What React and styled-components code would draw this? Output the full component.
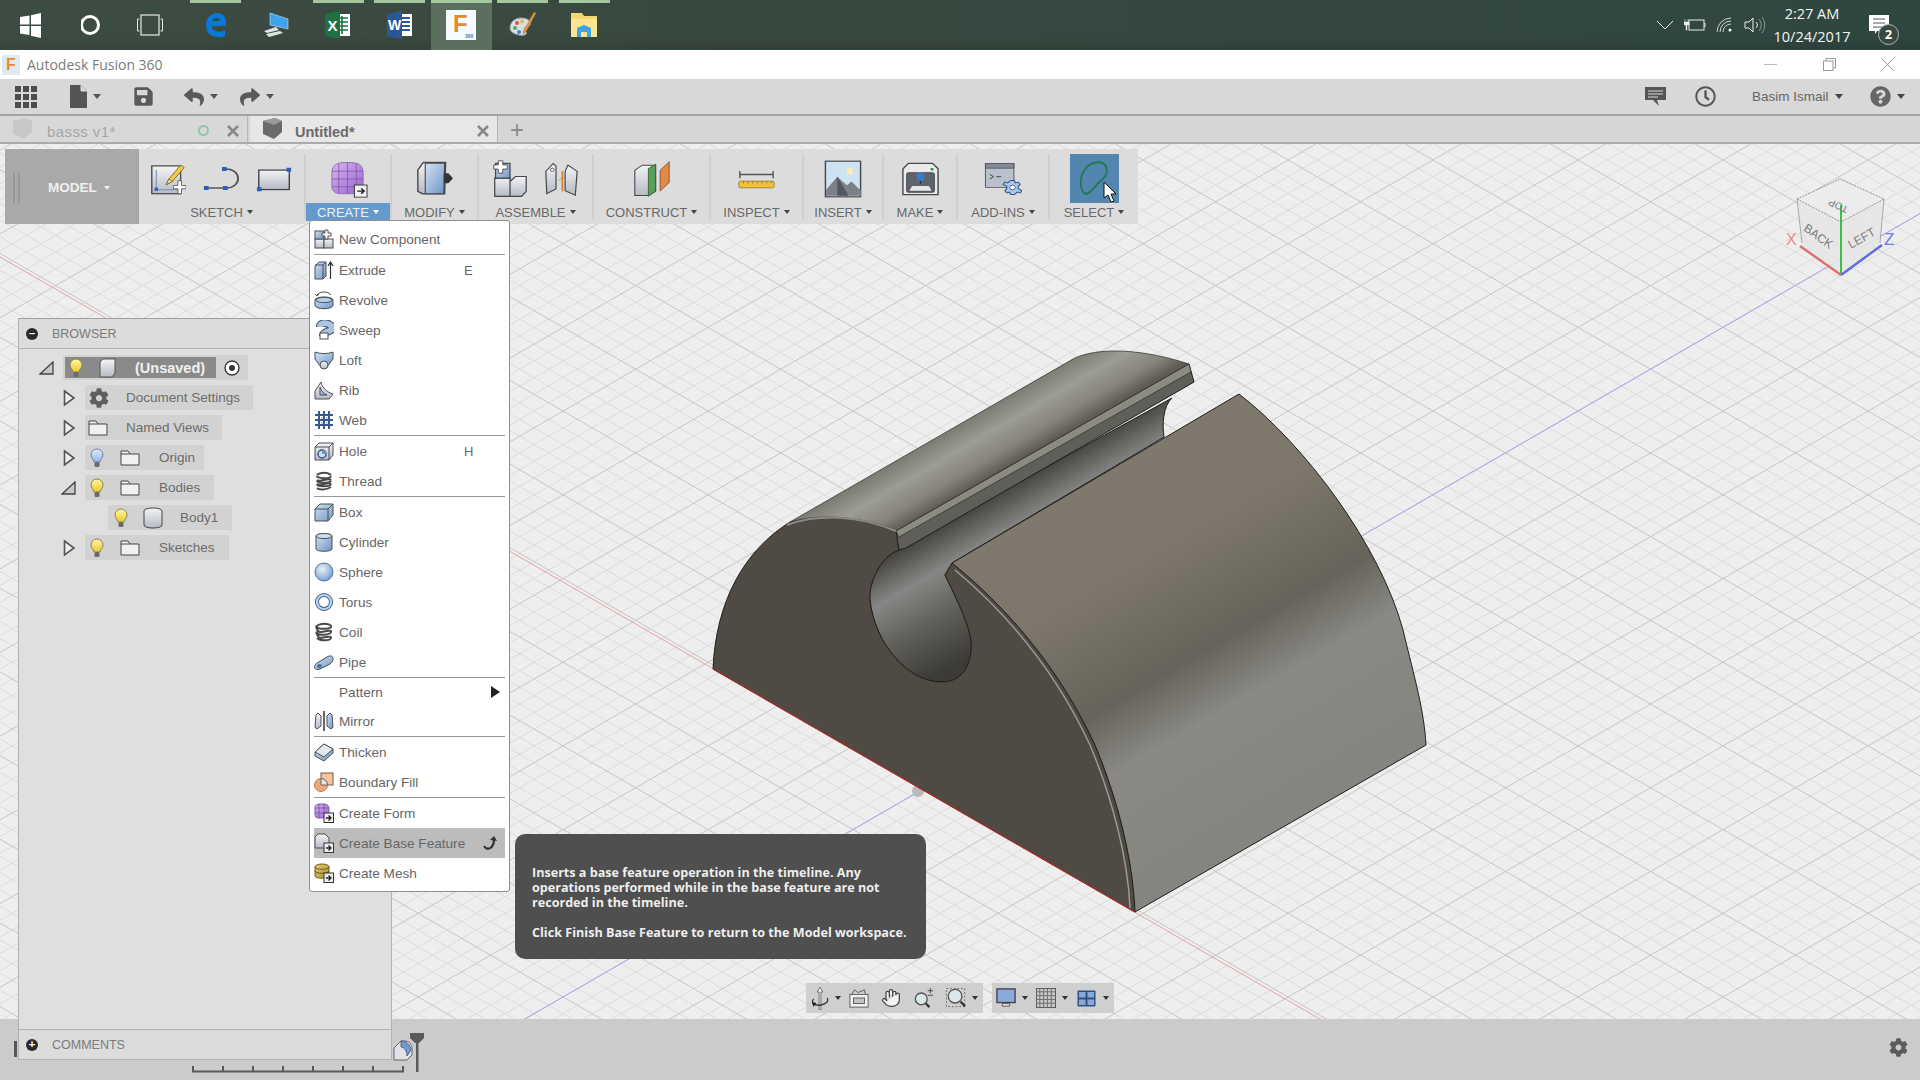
import React from "react"
import styled, { createGlobalStyle } from "styled-components"
import { FaCog, FaReply, FaShare, FaSave, FaRegClock, FaQuestionCircle } from "react-icons/fa"
import { Hand } from "lucide-react"

const GlobalStyle = createGlobalStyle`
  html, body { margin: 0; padding: 0; background: #ccc; overflow: hidden; }
  * { box-sizing: border-box; }
  #root { width: 1920px; height: 1080px; }
`

const Page = styled.div`
  width: 1920px;
  height: 1080px;
  display: flex;
  flex-direction: column;
  font-family: "Liberation Sans", Arial, sans-serif;
  overflow: hidden;
`

/* ---------- windows taskbar ---------- */
const Taskbar = styled.div`
  height: 50px;
  display: flex;
  background: linear-gradient(180deg, rgba(0,0,0,0) 70%, rgba(0,0,0,.1) 100%), linear-gradient(90deg, #3d4c42, #37483f 45%, #2f4640);
`
const Slot = styled.div`
  width: 61.5px;
  display: flex;
  flex-direction: column;
  align-items: center;
  background: ${p => (p.$active ? "#5b6f5e" : "transparent")};
`
const Tick = styled.div`
  height: 3px;
  width: ${p => (p.$active ? "100%" : "51px")};
  background: ${p => (p.$on ? "#a5c79d" : "transparent")};
`
const SlotIcon = styled.div`
  flex: 1;
  display: flex;
  align-items: center;
  justify-content: center;
  padding-bottom: 3px;
`
const Tray = styled.div`
  margin-left: auto;
  width: 270px;
  display: flex;
`
const TraySlot = styled.div`
  width: 30px;
  display: flex;
  align-items: center;
  justify-content: center;
`
const Clock = styled.div`
  width: 84px;
  text-align: center;
  color: #f2f5f2;
  font: 14.5px/23px "Open Sans", sans-serif;
  padding-top: 2px;
  white-space: nowrap;
`
const NotifSlot = styled.div`
  position: relative;
  width: 66px;
  padding: 15px 0 0 15px;
`
const Badge = styled.div`
  position: absolute;
  left: 24px;
  top: 24px;
  width: 21px;
  height: 21px;
  border-radius: 50%;
  background: #38493f;
  border: 1px solid #aeb8b0;
  color: #fff;
  font: bold 13px/19px "Open Sans", sans-serif;
  text-align: center;
`

/* ---------- title bar ---------- */
const TitleBar = styled.div`
  height: 29px;
  background: #fff;
  display: flex;
  align-items: center;
  padding-left: 2px;
`
const TitleText = styled.div`
  margin-left: 7px;
  color: #7b7b7b;
  font: 14px "Open Sans", sans-serif;
`
const WinButtons = styled.div`
  margin-left: auto;
  display: flex;
  padding-right: 3px;
`
const WinButton = styled.div`
  width: 58.5px;
  height: 29px;
  display: flex;
  align-items: center;
  justify-content: center;
`
const AppIcon = styled.div`
  width: 18px;
  height: 20px;
  background: #dfeaf5;
  color: #e88a2c;
  font: bold 16px/20px "Liberation Sans", sans-serif;
  text-align: center;
`

/* ---------- app toolbar ---------- */
const Toolbar = styled.div`
  height: 37px;
  background: #d8d8d8;
  border-bottom: 2px solid #a3a3a3;
  display: flex;
  align-items: center;
`
const ToolItem = styled.div`
  display: flex;
  align-items: center;
  margin-left: ${p => p.$ml || 0}px;
  color: #555;
  gap: 6px;
`
const Caret = styled.span`
  display: inline-block;
  width: 0;
  height: 0;
  flex: none;
  border-left: ${p => p.$s || 4}px solid transparent;
  border-right: ${p => p.$s || 4}px solid transparent;
  border-top: ${p => (p.$s || 4) + 1}px solid ${p => p.$c || "#555"};
`
const UserName = styled.span`
  color: #666;
  font-size: 13.5px;
`

/* ---------- tabs ---------- */
const TabStrip = styled.div`
  height: 28px;
  display: flex;
  background: #d6d6d6;
  border-bottom: 2px solid #ababab;
`
const Tab = styled.div`
  width: 248px;
  margin-right: 2px;
  display: flex;
  align-items: center;
  padding-left: 12px;
  background: ${p => (p.$active ? "#e7e7e7" : "#d8d8d8")};
  border-right: 1px solid #b5b5b5;
  color: ${p => (p.$active ? "#6a6a6a" : "#a6a6a6")};
  font-size: ${p => (p.$active ? 14.5 : 15)}px;
  font-weight: ${p => (p.$active ? 700 : 400)};
`
const TabName = styled.span`
  margin: 5px 0 0 ${p => (p.$active ? 12 : 14)}px;
  letter-spacing: ${p => (p.$active ? 0 : ".4px")};
`
const TabClose = styled.span`
  margin: 3px ${p => p.$mr || 8}px 0 auto;
  display: flex;
  gap: 18px;
  align-items: center;
`
const TabDot = styled.span`
  width: 11px;
  height: 11px;
  border: 2px solid #8fc6a8;
  border-radius: 50%;
`
const PlusTab = styled.div`
  margin: 2px 0 0 10px;
  color: #8a8a8a;
  font: 24px/24px "Liberation Sans", sans-serif;
`

/* ---------- 3d workspace ---------- */
const Workspace = styled.div`
  position: relative;
  z-index: 1;
  flex: 1;
  background: #eeeeee;
`
const Canvas = styled.svg`
  position: absolute;
  left: 0;
  top: 0;
  width: 1920px;
  height: 875px;
`
const Ribbon = styled.div`
  position: absolute;
  left: 5px;
  top: 5px;
  height: 75px;
  padding: 5px 0;
  display: flex;
  background: #dcdcdc;
`
const ModelBlock = styled.div`
  width: 134px;
  margin: -5px 0;
  background: #a9a9a9;
  display: flex;
  align-items: center;
  padding: 2px 0 0 8px;
  color: #f0f0f0;
  font-size: 13.5px;
  font-weight: 700;
`
const Handle = styled.div`
  width: 7px;
  height: 30px;
  border-left: 2px solid #979797;
  border-right: 2px solid #979797;
  margin-right: 28px;
`
const RibbonGroup = styled.div`
  width: ${p => p.$w}px;
  height: 65px;
  flex: none;
  border-right: ${p => (p.$last ? "none" : "2px solid #cfcfcf")};
  display: flex;
  flex-direction: column;
  align-items: center;
`
const IconRow = styled.div`
  height: 49px;
  flex: none;
  display: flex;
  align-items: center;
  justify-content: center;
  gap: ${p => p.$gap || 16}px;
`
const SelectBox = styled.div`
  position: relative;
  width: 49px;
  height: 49px;
  background: #5386ae;
  display: flex;
  align-items: center;
  justify-content: center;
`
const GroupLabel = styled.div`
  width: 100%;
  height: 18px;
  flex: none;
  display: flex;
  align-items: center;
  justify-content: center;
  gap: 4px;
  font-size: 13px;
  white-space: nowrap;
  color: ${p => (p.$active ? "#eaf1f8" : "#686868")};
  background: ${p => (p.$active ? "#6499cb" : "transparent")};
`

const Browser = styled.div`
  position: absolute;
  left: 18px;
  top: 174px;
  width: 374px;
  height: 742px;
  display: flex;
  flex-direction: column;
  background: #dfdfdf;
  border: 1px solid #b2b2b2;
  border-top-color: #a0a0a0;
`
const PanelHeader = styled.div`
  height: 30px;
  flex: none;
  display: flex;
  align-items: center;
  padding-left: 7px;
  gap: 14px;
  color: #7b7b7b;
  font-size: 12.5px;
  background: #dcdcdc;
  border-${p => (p.$bottom ? "top" : "bottom")}: 1px solid #b2b2b2;
`
const Dot = styled.span`
  width: 12px;
  height: 12px;
  border-radius: 50%;
  background: #2b2b2b;
  color: #fff;
  font: bold 11px/11px "Liberation Sans", sans-serif;
  text-align: center;
  flex: none;
`
const Tree = styled.div`
  flex: 1;
  display: flex;
  flex-direction: column;
  gap: 5px;
  padding-top: 6px;
`
const TreeRow = styled.div`
  display: flex;
  align-items: center;
  height: 25px;
  margin-left: ${p => p.$x}px;
`
const Expander = styled.div`
  width: ${p => p.$w}px;
  display: flex;
  align-items: center;
`
const TreeItem = styled.div`
  display: flex;
  align-items: center;
  height: 25px;
  width: ${p => p.$w}px;
  padding-left: ${p => p.$pad ?? 5}px;
  background: #d2d2d2;
  color: #6b6b6b;
  font-size: 13.5px;
  white-space: nowrap;
  gap: ${p => p.$gap || 0}px;
`
const RootBar = styled.div`
  height: 21px;
  flex: 1;
  margin-left: 2px;
  display: flex;
  align-items: center;
  padding-left: 4px;
  gap: 14px;
  background: #8a8a8a;
  color: #f1f1f1;
  font-size: 14.5px;
  font-weight: 700;
`
const ItemLabel = styled.span`
  margin-left: ${p => p.$ml}px;
`

const Menu = styled.div`
  position: absolute;
  left: 309px;
  top: 76px;
  width: 201px;
  height: 672px;
  padding: 3px 4px;
  background: #fff;
  border: 1px solid #8f8f8f;
  border-radius: 3px;
`
const MenuRow = styled.div`
  position: relative;
  height: ${p => p.$h || 30}px;
  display: flex;
  align-items: center;
  color: #666;
  font-size: 13.6px;
  background: ${p => (p.$hover ? "#bcbcbc" : "transparent")};
`
const MenuIcon = styled.div`
  width: 25px;
  height: 22px;
  display: flex;
  align-items: center;
`
const Shortcut = styled.span`
  position: absolute;
  left: 150px;
  color: #666;
  font-size: 13px;
`
const MenuArrow = styled.span`
  margin-left: auto;
  margin-right: 5px;
  width: 0;
  height: 0;
  border-top: 6px solid transparent;
  border-bottom: 6px solid transparent;
  border-left: 9px solid #222;
`
const HoverMark = styled.span`
  margin-left: auto;
  margin-right: 6px;
  display: flex;
`
const MenuLine = styled.div`
  height: 1px;
  background: #999;
`
const Tip = styled.div`
  position: absolute;
  left: 515px;
  top: 690px;
  width: 411px;
  height: 125px;
  padding: 31px 10px 0 17px;
  border-radius: 10px;
  background: #4f4f4f;
  color: #eeeeee;
  font: 700 12.6px/15px "Open Sans", sans-serif;
  white-space: nowrap;
`
const TipGap = styled.div`
  height: 15px;
`
const NavBar = styled.div`
  position: absolute;
  left: 806px;
  top: 839px;
  display: flex;
  gap: 9px;
`
const NavGroup = styled.div`
  height: 30px;
  display: flex;
  align-items: center;
  padding: 0 5px 0 4px;
  background: #cfcfcf;
`
const NavIcon = styled.span`
  display: flex;
  margin-left: ${p => p.$ml || 0}px;
`

/* ---------- timeline ---------- */
const Timeline = styled.div`
  position: relative;
  height: 61px;
  flex: none;
  background: #cbcbcb;
`
const FloatIcon = styled.div`
  position: absolute;
  left: ${p => p.$x}px;
  top: ${p => p.$y}px;
  display: flex;
`

/* ---------- icons ---------- */
const Defs = () => (
  <svg width="0" height="0" style={{ position: "absolute" }}>
    <defs>
      <linearGradient id="blue" x1="0" y1="0" x2="1" y2="1">
        <stop offset="0" stopColor="#d4e3f4" />
        <stop offset="1" stopColor="#6f95c4" />
      </linearGradient>
      <linearGradient id="grey" x1="0" y1="0" x2="0" y2="1">
        <stop offset="0" stopColor="#f4f4f4" />
        <stop offset="1" stopColor="#b4bac4" />
      </linearGradient>
      <radialGradient id="ball" cx=".4" cy=".35" r=".7">
        <stop offset="0" stopColor="#eaf2fb" />
        <stop offset="1" stopColor="#6f9bd0" />
      </radialGradient>
      <linearGradient id="purple" x1="0" y1="0" x2="1" y2="1">
        <stop offset="0" stopColor="#d6b4ef" />
        <stop offset="1" stopColor="#9a62cf" />
      </linearGradient>
      <linearGradient id="gold" x1="0" y1="0" x2="1" y2="1">
        <stop offset="0" stopColor="#e6cf74" />
        <stop offset="1" stopColor="#a98b2c" />
      </linearGradient>
      <linearGradient id="bulb" x1="0" y1="0" x2="0" y2="1">
        <stop offset="0" stopColor="#fff6a8" />
        <stop offset="1" stopColor="#eec92a" />
      </linearGradient>
      <linearGradient id="bulbOff" x1="0" y1="0" x2="0" y2="1">
        <stop offset="0" stopColor="#e4ecfb" />
        <stop offset="1" stopColor="#94b4ea" />
      </linearGradient>
    </defs>
  </svg>
)

const S = ({ w = 20, h = w, children, vb }) => (
  <svg
    width={w}
    height={h}
    viewBox={vb || `0 0 ${w} ${h}`}
    preserveAspectRatio={vb ? "none" : undefined}
    style={{ flex: "none", display: "block" }}
  >
    {children}
  </svg>
)

const line = "#4c4f57"
const Arrowbox = () => (
  <g>
    <rect x="10" y="10" width="9.5" height="9.5" fill="#eee" stroke="#333" />
    <path d="M12 15h4M14.5 12.5l2.5 2.5-2.5 2.5" fill="none" stroke="#222" strokeWidth="1.4" />
  </g>
)

const icons = {
  component: (
    <S>
      <rect x="1" y="10" width="9" height="9" fill="url(#grey)" stroke={line} />
      <rect x="10" y="10" width="9" height="9" fill="url(#grey)" stroke={line} />
      <rect x="1" y="2" width="9" height="8" fill="url(#blue)" stroke={line} />
      <path d="M11 1h3v3h3v3h-3v3h-3v-3h-3v-3h3z" fill="#fff" stroke={line} />
    </S>
  ),
  extrude: (
    <S>
      <path d="M1 6l4-4h7v14l-3 3H1z" fill="url(#blue)" stroke={line} />
      <path d="M9 5h-8M9 5v14M9 5l3-3" stroke={line} fill="none" />
      <path d="M16.5 19V2M14 6l2.5-4 2.500 4" stroke="#333" fill="none" strokeWidth="1.2" />
    </S>
  ),
  revolve: (
    <S>
      <path d="M1 10c0-4 18-4 18 0v5c0 5-18 5-18 0z" fill="url(#blue)" stroke={line} />
      <ellipse cx="10" cy="10" rx="8" ry="2.6" fill="#b9cfe9" stroke={line} />
      <path d="M3 5c3-4 11-4 14 0" fill="none" stroke="#555" />
      <path d="M1 4l2 2 2-2" fill="none" stroke="#555" />
    </S>
  ),
  sweep: (
    <S>
      <path d="M6 7c0-6 12-4 12 1s-9 2-9 8" fill="none" stroke={line} strokeWidth="8" />
      <path d="M6 7c0-6 12-4 12 1s-9 2-9 8" fill="none" stroke="#a9c4e4" strokeWidth="6" />
      <rect x="6" y="13" width="8" height="6" fill="#fff" stroke={line} />
    </S>
  ),
  loft: (
    <S>
      <path d="M1 2c5 2 13 2 18 0v7l-6 8H7L1 9z" fill="url(#blue)" stroke={line} />
      <circle cx="10" cy="15" r="4" fill="url(#grey)" stroke={line} />
    </S>
  ),
  rib: (
    <S>
      <path d="M1 19v-8L7 2c1 6 6 10 12 12l-4 5z" fill="url(#grey)" stroke={line} />
      <path d="M6 15V7c1 4 3 6 7 8z" fill="url(#blue)" stroke={line} />
    </S>
  ),
  web: (
    <S>
      <path d="M5 1v18M10 1v18M15 1v18M1 5h18M1 10h18M1 15h18" stroke="#39598b" strokeWidth="2" fill="none" />
      <path d="M7 7h1.500v1.500H7zM12 7h1.500v1.500H12zM7 12h1.500v1.500H7zM12 12h1.500v1.500H12z" fill="#8fb0d9" />
    </S>
  ),
  hole: (
    <S>
      <path d="M1 6l4-4h14v12l-4 5H1z" fill="url(#grey)" stroke={line} />
      <path d="M15 6v13M15 6H1M15 6l4-4" stroke={line} fill="none" />
      <circle cx="8" cy="13" r="4" fill="#cddcf0" stroke="#38527d" strokeWidth="1.400" />
      <path d="M8 13V9a4 4 0 0 1 4 4z" fill="#6f95c4" />
    </S>
  ),
  thread: (
    <S>
      <path d="M3 4c3-3 11-3 14 0M3 9c3 3 11-3 14 0M3 13c3 3 11-3 14 0M3 17c3 3 11 1 14-1M3 5c-1 2 13 4 14 0M3 9.500c0 3 13 3 14 0M3 13c0 3 13 3 14 0" fill="none" stroke="#4a4a4a" strokeWidth="2" />
    </S>
  ),
  box: (
    <S>
      <path d="M1 7l5-5h13v11l-5 6H1z" fill="url(#blue)" stroke={line} />
      <path d="M14 7v12M14 7H1M14 7l5-5" fill="none" stroke={line} />
    </S>
  ),
  cylinder: (
    <S>
      <path d="M2 4c0-3 16-3 16 0v13c0 3-16 3-16 0z" fill="url(#blue)" stroke={line} />
      <ellipse cx="10" cy="4" rx="8" ry="2.500" fill="#cfe0f2" stroke={line} />
    </S>
  ),
  sphere: (
    <S>
      <circle cx="10" cy="10" r="9" fill="url(#ball)" stroke="#5b6f8f" />
    </S>
  ),
  torus: (
    <S>
      <circle cx="10" cy="10" r="7" fill="none" stroke="#39598b" strokeWidth="4" />
      <circle cx="10" cy="10" r="7" fill="none" stroke="#bcd2ec" strokeWidth="2.200" />
    </S>
  ),
  coil: (
    <S>
      <path d="M3 4c3-3 12-3 14 0s-12 4-14 1 0 5 3 5 12-3 11 0-12 4-14 1 1 5 3 5 12-3 11 0-11 3-14 0" fill="none" stroke="#4a4a4a" strokeWidth="2" />
    </S>
  ),
  pipe: (
    <S>
      <path d="M3 11l10-6c7-4 8 4 3 7L6 17c-6 2-7-3-3-6z" fill="url(#blue)" stroke={line} />
      <ellipse cx="5.500" cy="14" rx="2.500" ry="2" fill="#4f6f9f" />
    </S>
  ),
  mirror: (
    <S>
      <path d="M2 4l2-2 3 3v10l-4 3-2-2z" fill="url(#grey)" stroke={line} />
      <path d="M18 4l-2-2-3 3v10l4 3 2-2z" fill="url(#blue)" stroke={line} />
      <path d="M10 0v20" stroke="#333" strokeWidth="1.500" />
    </S>
  ),
  thicken: (
    <S>
      <path d="M1 10l9-8 9 5v4l-9 8-9-5z" fill="url(#blue)" stroke={line} />
      <path d="M1 10l9 5 9-8-9-5z" fill="#e4e6ea" stroke={line} />
    </S>
  ),
  boundary: (
    <S>
      <rect x="7" y="1" width="12" height="12" fill="#f2c39e" stroke="#7a5a40" />
      <circle cx="7" cy="13" r="6.500" fill="#eda777" stroke="#b97b50" />
      <path d="M7 6.500V13h6.500A6.500 6.500 0 0 0 7 6.500z" fill="#dfe5ee" stroke="#666" />
    </S>
  ),
  form: (
    <S>
      <path d="M1 5c0-3 2-4 5-4h3c5 0 6 2 6 6v8H5c-3 0-4-1-4-4z" fill="url(#purple)" stroke="#7e58a8" />
      <path d="M5 1v14M10 1v14M1 5h14M1 10h14" stroke="#6e4a98" strokeWidth=".7" />
      <Arrowbox />
    </S>
  ),
  base: (
    <S>
      <path d="M1 4l3-3h7l4 4v10H1z" fill="url(#grey)" stroke={line} />
      <Arrowbox />
    </S>
  ),
  mesh: (
    <S>
      <path d="M1 4c0-4 14-4 14 0v9c0 3-14 3-14 0z" fill="url(#gold)" stroke="#6f5a1e" />
      <path d="M1 4c0 3 14 3 14 0M1 8c0 3 14 3 14 0" fill="none" stroke="#6f5a1e" />
      <Arrowbox />
    </S>
  ),
}

const menuItems = [
  { label: "New Component", icon: "component" },
  { sep: true },
  { label: "Extrude", icon: "extrude", key_: "E" },
  { label: "Revolve", icon: "revolve" },
  { label: "Sweep", icon: "sweep" },
  { label: "Loft", icon: "loft" },
  { label: "Rib", icon: "rib" },
  { label: "Web", icon: "web" },
  { sep: true },
  { label: "Hole", icon: "hole", key_: "H" },
  { label: "Thread", icon: "thread" },
  { sep: true },
  { label: "Box", icon: "box" },
  { label: "Cylinder", icon: "cylinder" },
  { label: "Sphere", icon: "sphere" },
  { label: "Torus", icon: "torus" },
  { label: "Coil", icon: "coil" },
  { label: "Pipe", icon: "pipe" },
  { sep: true },
  { label: "Pattern", arrow: true, h: 28 },
  { label: "Mirror", icon: "mirror" },
  { sep: true },
  { label: "Thicken", icon: "thicken" },
  { label: "Boundary Fill", icon: "boundary" },
  { sep: true },
  { label: "Create Form", icon: "form" },
  { label: "Create Base Feature", icon: "base", hover: true },
  { label: "Create Mesh", icon: "mesh" },
]

const Bulb = ({ off }) => (
  <S w={14} h={20}>
    <path d="M7 1a6 6 0 0 0-6 6c0 3 2.500 4 3 7h6c.5-3 3-4 3-7a6 6 0 0 0-6-6z" fill={off ? "url(#bulbOff)" : "url(#bulb)"} stroke={off ? "#6f7f9f" : "#8c8450"} />
    <rect x="4.500" y="14" width="5" height="5" rx="1.500" fill="#6a6a6a" />
  </S>
)
const Folder = () => (
  <S w={20} h={16}>
    <path d="M1 1h7l2 3h9v11H1z" fill="#f1f1f1" stroke="#444" />
    <path d="M1 4h9" stroke="#444" />
  </S>
)
const Collapsed = () => (
  <S w={13} h={18}>
    <path d="M1.500 2L11 9l-9.500 7z" fill="#eee" stroke="#555" strokeWidth="1.600" />
  </S>
)
const Opened = () => (
  <S w={15} h={14}>
    <path d="M1 13L14 1v12z" fill="#c8c8c8" stroke="#444" strokeWidth="1.300" />
  </S>
)

const Windows = () => (
  <S w={21} h={25}>
    <path d="M0 4l9.500-1.500v9H0zM11 2.200L21 0v11.500H11zM0 13h9.500v9L0 20.500zM11 13h10v12L11 22.800z" fill="#fff" />
  </S>
)
const Edge = () => (
  <S w={25} h={30}>
    <path d="M3 15C3 7 9 3 14 3c6 0 9 4 9 10v3H9c0 6 8 7 13 4v6c-7 3-19 1-19-11z" fill="#0a78d7" />
    <path d="M9 11h8c0-4-7-4-8 0z" fill="#37483f" />
  </S>
)
const Computer = () => (
  <S w={28} h={30}>
    <path d="M7 3l18 6v10L7 15z" fill="#3ea3ea" stroke="#cde" strokeWidth=".6" />
    <path d="M13 17l3 3-12 3 -3-2zM3 24l14-3 3 2-14 4z" fill="#dfe4e6" />
  </S>
)
const Excel = () => (
  <S w={26} h={30}>
    <rect x="9" y="4" width="16" height="22" fill="#fff" />
    <path d="M12 8h11M12 12h11M12 16h11M12 20h11M17 6v18" stroke="#1e7145" strokeWidth="1.600" />
    <path d="M0 4l15-3v28L0 26z" fill="#1e7145" />
    <text x="2.500" y="21" fill="#fff" fontSize="15" fontWeight="700" fontFamily="Liberation Sans">X</text>
  </S>
)
const Word = () => (
  <S w={26} h={30}>
    <rect x="9" y="4" width="16" height="22" fill="#fff" />
    <path d="M15 8h8M15 12h8M15 16h8M15 20h8" stroke="#2b579a" strokeWidth="1.800" />
    <path d="M0 4l15-3v28L0 26z" fill="#2b579a" />
    <text x="1" y="20" fill="#fff" fontSize="14" fontWeight="700" fontFamily="Liberation Sans">W</text>
  </S>
)
const FusionTile = () => (
  <S w={30} h={30}>
    <rect width="30" height="30" fill="#f7fbff" />
    <text x="7" y="22" fill="#e8882a" fontSize="24" fontWeight="700" fontFamily="Liberation Sans">F</text>
    <text x="19" y="28" fill="#3a7fc4" fontSize="5" fontWeight="700" fontFamily="Liberation Sans">360</text>
  </S>
)
const Palette = () => (
  <S w={30} h={30}>
    <path d="M2 18C2 9 12 6 19 9c6 3 3 8 0 8-4 0-3 4-1 5 2 3-3 4-7 3-5-1-9-3-9-7z" fill="#d8dfe5" stroke="#8a949c" />
    <circle cx="9" cy="13" r="2" fill="#e2504a" />
    <circle cx="14" cy="11.500" r="2" fill="#e3c13a" />
    <circle cx="7" cy="18" r="2" fill="#52a852" />
    <circle cx="11" cy="22" r="2" fill="#3c86d0" />
    <path d="M26 2l2 1-10 19-3 3 0-4z" fill="#d9913a" />
  </S>
)
const FolderApp = () => (
  <S w={28} h={28}>
    <path d="M1 2h11l2 3h13v21H1z" fill="#f5d76e" />
    <rect x="1" y="8" width="26" height="18" fill="#fbe592" />
    <path d="M7 26v-9l7-3 7 3v9h-4v-5h-6v5z" fill="#3fa4e0" />
  </S>
)
const taskApps = [
  { el: <Windows /> },
  { el: <S w={22}><circle cx="9" cy="11" r="8.500" fill="none" stroke="#fff" strokeWidth="3" /></S> },
  { el: <S w={34} h={22}><rect x="4" y="1" width="18" height="20" fill="none" stroke="#e8e8e8" strokeWidth="1.200" /><path d="M2.500 5H.5v12h2M23.500 5h2v12h-2" fill="none" stroke="#e8e8e8" /></S> },
  { el: <Edge />, on: true },
  { el: <Computer /> },
  { el: <Excel />, on: true },
  { el: <Word />, on: true },
  { el: <FusionTile />, on: true, active: true },
  { el: <Palette />, on: true },
  { el: <FolderApp />, on: true },
]

const Sketch = () => (
  <S w={36} h={36} vb="0 0 40 44">
    <rect x="2" y="6" width="32" height="34" fill="url(#grey)" stroke="#44474e" strokeWidth="1.500" />
    <path d="M7 11v24h24" fill="none" stroke="#6e8fbe" strokeWidth="1.200" />
    <rect x="5" y="32.500" width="4" height="4" fill="#2e62b8" />
    <path d="M18 29l3-7 13-17 4 3-13 17z" fill="#f0c84a" stroke="#7a6320" />
    <path d="M18 29l3-7 4 3z" fill="#f5e3b0" stroke="#7a6320" />
    <path d="M26 30h5v-6h4v6h5v4h-5v6h-4v-6h-5z" fill="#fff" stroke="#555" />
  </S>
)
const Arc = () => (
  <S w={38} h={27} vb="0 0 40 34">
    <path d="M4 29h22a12 12 0 0 0 0-24h-2" fill="none" stroke="#555" strokeWidth="2" />
    <path d="M2 26.500h5v5H2zM22 26.500h5v5h-5zM21 2.500h5v5h-5z" fill="#2b5fba" />
  </S>
)
const RectIc = () => (
  <S w={37} h={26} vb="0 0 40 32">
    <rect x="3" y="5" width="33" height="24" fill="url(#grey)" stroke="#3f4248" strokeWidth="1.500" />
    <path d="M33 2h5v5h-5zM1 26h5v5H1z" fill="#2b5fba" />
  </S>
)
const CreateIc = () => (
  <S w={39} h={38} vb="0 0 40 44">
    <path d="M3 15C3 5 9 3 16 3h6c8 0 13 3 13 12v16c0 6-4 8-10 8H13C6 39 3 36 3 31z" fill="url(#purple)" stroke="#8a6fae" />
    <path d="M10 4v34M19 3v36M28 4v34M3 13h32M3 22h32M3 31h32" stroke="#7a55a4" strokeWidth=".8" fill="none" />
    <rect x="26" y="29" width="13" height="14" fill="#eee" stroke="#333" />
    <path d="M29 36h6M33 33l3 3-3 3" fill="none" stroke="#222" strokeWidth="1.600" />
  </S>
)
const ModifyIc = () => (
  <S w={37} h={38} vb="0 0 40 46">
    <path d="M2 12l6-9h24l-1 38H7L2 38z" fill="url(#grey)" stroke="#44474e" strokeWidth="1.500" />
    <path d="M10 4h21l-1 37H10z" fill="url(#blue)" stroke="#44474e" strokeWidth="1.200" />
    <path d="M30 16h5l5 6-5 6h-5z" fill="#333" />
  </S>
)
const AssembleA = () => (
  <S w={36} h={38} vb="0 0 40 46">
    <path d="M3 22h17v22H3zM20 26l6-6h12v18l-5 6H20z" fill="url(#grey)" stroke="#44474e" strokeWidth="1.400" />
    <path d="M4 4h16v18H4z" fill="url(#blue)" stroke="#44474e" strokeWidth="1.400" />
    <path d="M7 1h5v5h5v5h-5v5H7v-5H2V6h5z" fill="#fff" stroke="#444" />
  </S>
)
const AssembleB = () => (
  <S w={35} h={34} vb="0 0 38 44">
    <path d="M2 12l8-10 3 3v30l-10 6z" fill="url(#grey)" stroke="#44474e" strokeWidth="1.300" />
    <path d="M36 12l-10-8-3 8v25l11 6z" fill="url(#grey)" stroke="#44474e" strokeWidth="1.300" />
    <circle cx="9" cy="10" r="2" fill="#fff" stroke="#444" />
    <path d="M20 12v26" stroke="#d9802a" strokeWidth="2" />
    <path d="M16 24l4-4 4 4" fill="none" stroke="#d9802a" />
  </S>
)
const ConstructIc = () => (
  <S w={38} h={38} vb="0 0 42 44">
    <path d="M2 12l8-6h15v30l-8 5H2z" fill="url(#grey)" stroke="#44474e" strokeWidth="1.200" />
    <path d="M17 10l8-5v31l-8 6z" fill="#57a05c" stroke="#2f5f33" />
    <path d="M30 36V12l10-10v24z" fill="#e08a4a" stroke="#8a4f24" />
  </S>
)
const InspectIc = () => (
  <S w={37} h={22} vb="0 0 40 30">
    <path d="M2 4v10M38 4v10" stroke="#555" strokeWidth="1.500" />
    <path d="M2 9h36" stroke="#555" strokeWidth="2" />
    <rect x="1" y="18" width="38" height="9" rx="1.500" fill="#f0c038" stroke="#9a7a20" />
    <path d="M6 18v3M11 18v3M16 18v3M21 18v3M26 18v3M31 18v3M36 18v3" stroke="#8a6a10" />
  </S>
)
const InsertIc = () => (
  <S w={38} h={38} vb="0 0 40 48">
    <rect x="1.500" y="1.500" width="37" height="45" fill="#cfe2f2" stroke="#44474e" strokeWidth="1.500" />
    <rect x="24" y="10" width="6" height="8" fill="#fdeeb0" />
    <path d="M2 45V38l12-17 10 11 5-5 10 12v6z" fill="#7c8088" />
    <path d="M14 21l12 24h-12z" fill="#52565e" />
  </S>
)
const MakeIc = () => (
  <S w={37} h={36} vb="0 0 40 46">
    <path d="M1 10l6-7h26l6 7v33H1z" fill="#eaeaea" stroke="#44474e" strokeWidth="1.500" />
    <rect x="5" y="15" width="30" height="25" rx="2" fill="#5f636b" stroke="#3c3f44" />
    <rect x="16" y="15" width="8" height="11" fill="#3c78c8" />
    <path d="M19 26h2l-1 4z" fill="#222" />
    <path d="M8 38l3-6h18l3 6z" fill="#e8e8e8" />
    <rect x="31" y="9" width="3" height="3" fill="#1c9a3c" />
  </S>
)
const AddinsIc = () => (
  <S w={38} h={34} vb="0 0 40 44">
    <rect x="1.500" y="2" width="30" height="31" fill="#b9c1cf" stroke="#555" />
    <rect x="1.500" y="2" width="30" height="6" fill="#828a96" stroke="#555" />
    <path d="M6 16l4 3-4 3M13 19h5" fill="none" stroke="#333" />
    <g transform="translate(30 33)">
      <path d="M-2-9h4l1 3 3-1 2 3-2 2.500v3L10 4 8 7l-3-1-3 3h-4l-1-3-3 1-2-3 2-2.500v-3L-10-4l2-3 3 1z" fill="#a9c8ea" stroke="#35568c" strokeWidth="1.200" />
      <circle r="3" fill="#fff" stroke="#35568c" />
    </g>
  </S>
)
const SelectIc = () => (
  <S w={36} h={40} vb="0 0 46 46">
    <path d="M7 33C3 20 12 6 25 4c12-2 15 5 14 12-1 6-7 8-12 13s-10 11-14 11c-3 0-5-3-6-7z" fill="none" stroke="#1f7a52" strokeWidth="2.300" />
  </S>
)
const Cursor = styled.svg`
  position: absolute;
  left: 33px;
  top: 27px;
`

const gridLines = (() => {
  const k = 0.5773
  const mk = (base, step, every) => {
    let minor = ""
    let major = ""
    const build = (sign, c0) => {
      for (let i = -90; i < 90 * 2; i++) {
        const c = c0 + i * step
        const y1 = c - 144
        const y2 = sign * k * 1920 + c - 144
        const seg = `M0 ${y1.toFixed(1)}L1920 ${y2.toFixed(1)}`
        if (((i % every) + every) % every === 0) major += seg
        else minor += seg
      }
    }
    build(1, base[0])
    build(-1, base[1])
    return { minor, major }
  }
  return mk([-751, 1071], 16.74, 5)
})()

const Model = () => (
  <g transform="translate(0 -144)" strokeLinejoin="round">
    <defs>
      <linearGradient id="bigFace" gradientUnits="userSpaceOnUse" x1="952" y1="563" x2="1147" y2="899">
        <stop offset="0" stopColor="#7f796d" />
        <stop offset=".25" stopColor="#7d776b" />
        <stop offset=".52" stopColor="#66635a" />
        <stop offset=".68" stopColor="#8a8985" />
        <stop offset="1" stopColor="#84857f" />
      </linearGradient>
      <linearGradient id="topFace" gradientUnits="userSpaceOnUse" x1="792" y1="521" x2="823" y2="574">
        <stop offset="0" stopColor="#7b7a72" />
        <stop offset=".38" stopColor="#9d9d95" />
        <stop offset=".75" stopColor="#85837a" />
        <stop offset="1" stopColor="#5e5c54" />
      </linearGradient>
      <linearGradient id="inner" gradientUnits="userSpaceOnUse" x1="899" y1="550" x2="966" y2="666">
        <stop offset="0" stopColor="#45433e" />
        <stop offset=".28" stopColor="#868785" />
        <stop offset=".6" stopColor="#5f5e58" />
        <stop offset=".95" stopColor="#3d3b36" />
      </linearGradient>
    </defs>
    <circle cx="918" cy="791" r="6" fill="#b9b9b9" />
    <path
      d="M899 548L1172 398C1163 406 1162 425 1164 437L952 563L945 575C952 590 968 620 971 640C973 660 965 682 942 682C905 682 874 640 870 600C868 585 880 556 899 550Z"
      fill="url(#inner)"
      stroke="#1c1c1a"
    />
    <path
      fillRule="evenodd"
      d="M713 669C716 600 745 550 790 522C825 512 865 518 896 531L899 550C880 556 868 585 870 600C874 640 905 682 942 682C965 682 973 660 971 640C968 620 952 590 945 575L952 563C1010 610 1060 670 1095 745C1118 800 1133 860 1135 912Z"
      fill="#4f4b44"
      stroke="#22211f"
    />
    <path
      d="M952 563L1239 394C1305 445 1380 545 1403 630C1415 680 1424 710 1426 745L1135 912C1133 860 1118 800 1095 745C1060 670 1010 610 952 563Z"
      fill="url(#bigFace)"
      stroke="#1f1f1d"
    />
    <path d="M955 570C1010 616 1056 672 1090 745C1113 800 1128 860 1130 908" fill="none" stroke="#9a9a94" strokeWidth="1.500" />
    <path
      d="M790 522L1073 359C1090 350 1130 345 1189 364L899 531C865 518 825 512 790 522Z"
      fill="url(#topFace)"
      stroke="#3a3935"
      strokeWidth=".8"
    />
    <path d="M896 531L1189 364L1194 382L906 548L899 550Z" fill="#5f5e58" stroke="#1f1f1d" />
    <path d="M896 531L1189 364L1191 372L899 537Z" fill="#8c8b83" stroke="#35342f" strokeWidth=".8" />
    <path d="M787 525C820 513 860 516 896 531" fill="none" stroke="#8b8a83" strokeWidth="2" />
    <path d="M713 669L1135 912" stroke="#a8322e" strokeWidth="1.300" />
  </g>
)

const ViewCube = () => (
  <g transform="translate(0 -144)">
    <path d="M1797 199L1840 179L1884 199L1880 243L1841 275L1802 243Z" fill="#e6e6e6" opacity=".9" />
    <path d="M1797 199L1840 179L1884 199L1841 222Z" fill="#ececec" stroke="#808080" strokeDasharray="2 1" strokeWidth=".8" />
    <path d="M1797 199L1802 243M1884 199L1880 243" fill="none" stroke="#a0a0a0" strokeWidth=".9" />
    <path d="M1841 205V275" stroke="#39c23f" strokeWidth="2" />
    <path d="M1841 275L1800 246" stroke="#e07070" strokeWidth="2.500" />
    <path d="M1841 275L1882 245" stroke="#5a6ee0" strokeWidth="2.500" />
    <text transform="translate(1803 230) rotate(32) skewY(4)" fontSize="12" fill="#7a7a7a" fontFamily="Liberation Sans">BACK</text>
    <text transform="translate(1851 249) rotate(-30)" fontSize="12" fill="#7a7a7a" fontFamily="Liberation Sans">LEFT</text>
    <text transform="translate(1849 207) rotate(205)" fontSize="10" fill="#7a7a7a" fontFamily="Liberation Sans">TOP</text>
    <text x="1786" y="245" fontSize="16" fill="#ef8a8a" fontFamily="Liberation Sans">X</text>
    <text x="1884" y="245" fontSize="17" fill="#6a7cee" fontFamily="Liberation Sans">Z</text>
  </g>
)

const Lbl = ({ children, active }) => (
  <GroupLabel $active={active}>
    {children}
    <Caret $s={3.500} $c={active ? "#fff" : "#444"} />
  </GroupLabel>
)

const tree = [
  { x: 62, exp: <Collapsed />, w: 168, pad: 4, name: "Document Settings", parts: [<FaCog key="g" size={20} color="#5f5f5f" />], ml: 17 },
  { x: 62, exp: <Collapsed />, w: 137, pad: 3, name: "Named Views", parts: [<Folder key="f" />], ml: 18 },
  { x: 62, exp: <Collapsed />, w: 119, name: "Origin", parts: [<Bulb key="b" off />, <Folder key="f" />], ml: 3, gap: 16 },
  { x: 60, exp: <Opened />, w: 129, name: "Bodies", parts: [<Bulb key="b" />, <Folder key="f" />], ml: 3, gap: 16 },
  {
    x: 107,
    w: 124,
    pad: 6,
    name: "Body1",
    parts: [
      <Bulb key="b" />,
      <S key="c" w={20} h={22}>
        <path d="M1 4c0-4 18-4 18 0v14c0 4-18 4-18 0z" fill="url(#grey)" stroke="#444" />
      </S>,
    ],
    ml: 2,
    gap: 15,
  },
  { x: 62, exp: <Collapsed />, w: 144, name: "Sketches", parts: [<Bulb key="b" />, <Folder key="f" />], ml: 3, gap: 16 },
]

const App = () => (
  <Page>
    <GlobalStyle />
    <Defs />
    <Taskbar>
      {taskApps.map((a, i) => (
        <Slot key={i} $active={a.active}>
          <Tick $on={a.on} $active={a.active} />
          <SlotIcon>{a.el}</SlotIcon>
        </Slot>
      ))}
      <Tray>
        <TraySlot>
          <S w={18} h={10}><path d="M1 1l8 8 8-8" fill="none" stroke="#f0f0f0" /></S>
        </TraySlot>
        <TraySlot>
          <S w={22} h={14}>
            <rect x="5" y="2" width="15" height="10" fill="none" stroke="#eee" />
            <path d="M1 1v3M4 1v3M0 4h5v3H3v5H2V7H0z" fill="#eee" stroke="#eee" strokeWidth=".5" />
            <path d="M21 5v4" stroke="#eee" />
          </S>
        </TraySlot>
        <TraySlot>
          <S w={18} h={16}>
            <path d="M1 15A14 14 0 0 1 15 1M4 15A11 11 0 0 1 15 4M7 15a8 8 0 0 1 8-8" fill="none" stroke="#ccd3cd" />
            <circle cx="14" cy="13" r="1.500" fill="#fff" />
          </S>
        </TraySlot>
        <TraySlot>
          <S w={22} h={18}>
            <path d="M1 6h4l4-4v14l-4-4H1z" fill="none" stroke="#eee" />
            <path d="M12 6a4 4 0 0 1 0 6" fill="none" stroke="#eee" />
            <path d="M15 3a9 9 0 0 1 0 12M18 1a13 13 0 0 1 0 16" fill="none" stroke="#8c968e" />
          </S>
        </TraySlot>
        <Clock>
          2:27 AM
          <br />
          10/24/2017
        </Clock>
        <NotifSlot>
          <S w={20} h={19}>
            <path d="M0 0h20v16H8l-2 3v-3H0z" fill="#fff" />
            <path d="M4 4h12M4 8h12M4 12h12" stroke="#556" />
          </S>
          <Badge>2</Badge>
        </NotifSlot>
      </Tray>
    </Taskbar>

    <TitleBar>
      <AppIcon>F</AppIcon>
      <TitleText>Autodesk Fusion 360</TitleText>
      <WinButtons>
        <WinButton><S w={13} h={3}><path d="M0 1.500h13" stroke="#bbb" /></S></WinButton>
        <WinButton>
          <S w={13} h={13}>
            <rect x=".5" y="3" width="9.500" height="9.500" fill="#fff" stroke="#999" />
            <path d="M3 3V.5h9.500V10H10" fill="none" stroke="#999" />
          </S>
        </WinButton>
        <WinButton><S w={13} h={13}><path d="M.5.5l12 12M12.500.5l-12 12" stroke="#999" /></S></WinButton>
      </WinButtons>
    </TitleBar>

    <Toolbar>
      <ToolItem $ml={15}>
        <S w={22} h={22}>
          <path d="M0 0h6v6H0zM8 0h6v6H8zM16 0h6v6h-6zM0 8h6v6H0zM8 8h6v6H8zM16 8h6v6h-6zM0 16h6v6H0zM8 16h6v6H8zM16 16h6v6h-6z" fill="#4d4d4d" />
        </S>
      </ToolItem>
      <ToolItem $ml={33}>
        <S w={17} h={23}><path d="M0 0h11l6 6v17H0z" fill="#555" /><path d="M11 0v6h6" fill="#ddd" stroke="#d8d8d8" /></S>
        <Caret $s={4} />
      </ToolItem>
      <ToolItem $ml={32}><FaSave size={21} color="#5a5a5a" /></ToolItem>
      <ToolItem $ml={30}><FaReply size={20} color="#5a5a5a" /><Caret $s={4} /></ToolItem>
      <ToolItem $ml={22}><FaShare size={20} color="#5a5a5a" /><Caret $s={4} /></ToolItem>
      <ToolItem $ml={1371}>
        <S w={21} h={21}><path d="M0 1h21v13h-7l-2 0 2 6-6-6H0z" fill="#555" /><path d="M3 5h15M3 8h15M3 11h10" stroke="#ddd" /></S>
      </ToolItem>
      <ToolItem $ml={29}><FaRegClock size={21} color="#555" /></ToolItem>
      <ToolItem $ml={36}><UserName>Basim Ismail</UserName><Caret $s={4} $c="#444" /></ToolItem>
      <ToolItem $ml={27}><FaQuestionCircle size={21} color="#666" /><Caret $s={4} $c="#444" /></ToolItem>
    </Toolbar>

    <TabStrip>
      <Tab>
        <S w={21} h={24}><path d="M1 4l12-3 7 3v11l-8 7-11-5z" fill="#c8c8c8" /></S>
        <TabName>basss v1*</TabName>
        <TabClose>
          <TabDot />
          <S w={12} h={12}><path d="M1 1l10 10M11 1L1 11" stroke="#888" strokeWidth="2.600" /></S>
        </TabClose>
      </Tab>
      <Tab $active>
        <S w={21} h={24}><path d="M1 4l12-3 7 3v11l-8 7-11-5z" fill="#6a6a6a" /><path d="M1 4l11 4 8-4-7-3z" fill="#9a9a9a" /></S>
        <TabName $active>Untitled*</TabName>
        <TabClose>
          <S w={12} h={12}><path d="M1 1l10 10M11 1L1 11" stroke="#888" strokeWidth="2.600" /></S>
        </TabClose>
      </Tab>
      <PlusTab>+</PlusTab>
    </TabStrip>

    <Workspace>
      <Canvas viewBox="0 0 1920 875">
        <path d={gridLines.minor} stroke="#dcdcdc" strokeWidth="1" fill="none" />
        <path d={gridLines.major} stroke="#c6c6c6" strokeWidth="1" fill="none" />
        <path d="M0 113L1920 1221.500" stroke="#e4a4a4" strokeWidth="1" fill="none" />
        <path d="M0 1178L1920 69.500" stroke="#a7a7ee" strokeWidth="1" fill="none" />
        <Model />
        <ViewCube />
      </Canvas>

      <Ribbon>
        <ModelBlock>
          <Handle />
          MODEL&nbsp;&nbsp;<Caret $s={3.500} $c="#eee" />
        </ModelBlock>
        <RibbonGroup $w={167}>
          <IconRow><Sketch /><Arc /><RectIc /></IconRow>
          <Lbl>SKETCH</Lbl>
        </RibbonGroup>
        <RibbonGroup $w={86}>
          <IconRow><CreateIc /></IconRow>
          <Lbl active>CREATE</Lbl>
        </RibbonGroup>
        <RibbonGroup $w={87}>
          <IconRow><ModifyIc /></IconRow>
          <Lbl>MODIFY</Lbl>
        </RibbonGroup>
        <RibbonGroup $w={115}>
          <IconRow><AssembleA /><AssembleB /></IconRow>
          <Lbl>ASSEMBLE</Lbl>
        </RibbonGroup>
        <RibbonGroup $w={117}>
          <IconRow><ConstructIc /></IconRow>
          <Lbl>CONSTRUCT</Lbl>
        </RibbonGroup>
        <RibbonGroup $w={93}>
          <IconRow><InspectIc /></IconRow>
          <Lbl>INSPECT</Lbl>
        </RibbonGroup>
        <RibbonGroup $w={80}>
          <IconRow><InsertIc /></IconRow>
          <Lbl>INSERT</Lbl>
        </RibbonGroup>
        <RibbonGroup $w={74}>
          <IconRow><MakeIc /></IconRow>
          <Lbl>MAKE</Lbl>
        </RibbonGroup>
        <RibbonGroup $w={92}>
          <IconRow><AddinsIc /></IconRow>
          <Lbl>ADD-INS</Lbl>
        </RibbonGroup>
        <RibbonGroup $w={88} $last>
          <IconRow>
            <SelectBox>
              <SelectIc />
              <Cursor width="14" height="22" viewBox="0 0 14 22">
                <path d="M1 1v16l4-3 3 7 3-1-3-7h5z" fill="#fff" stroke="#111" />
              </Cursor>
            </SelectBox>
          </IconRow>
          <Lbl>SELECT</Lbl>
        </RibbonGroup>
      </Ribbon>

      <Browser>
        <PanelHeader>
          <Dot>–</Dot>
          BROWSER
        </PanelHeader>
        <Tree>
          <TreeRow $x={20}>
            <Expander $w={24}><Opened /></Expander>
            <TreeItem $w={185} $pad={0}>
              <RootBar>
                <Bulb />
                <S w={21} h={20}>
                  <path d="M5 4l3-3h12v14l-3 4H5z" fill="url(#grey)" stroke="#555" transform="translate(-2 0)" />
                </S>
                <ItemLabel $ml={3}>(Unsaved)</ItemLabel>
              </RootBar>
              <S w={32} h={20}>
                <circle cx="16" cy="10" r="7" fill="#fff" stroke="#444" strokeWidth="1.500" />
                <circle cx="16" cy="10" r="3" fill="#333" />
              </S>
            </TreeItem>
          </TreeRow>
          {tree.map(t => (
            <TreeRow key={t.name} $x={t.x - 18}>
              {t.exp ? <Expander $w={t.x === 60 ? 24 : 22}>{t.exp}</Expander> : <Expander $w={0} />}
              <TreeItem $w={t.w} $pad={t.pad} $gap={t.gap}>
                {t.parts}
                <ItemLabel $ml={t.ml}>{t.name}</ItemLabel>
              </TreeItem>
            </TreeRow>
          ))}
        </Tree>
        <PanelHeader $bottom>
          <Dot>+</Dot>
          COMMENTS
        </PanelHeader>
      </Browser>

      <Menu>
        {menuItems.map((m, i) =>
          m.sep ? (
            <MenuLine key={i} />
          ) : (
            <MenuRow key={i} $hover={m.hover} $h={m.h}>
              <MenuIcon>{m.icon && icons[m.icon]}</MenuIcon>
              {m.label}
              {m.key_ && <Shortcut>{m.key_}</Shortcut>}
              {m.arrow && <MenuArrow />}
              {m.hover && (
                <HoverMark>
                  <S w={16} h={16}>
                    <path d="M1 11c3 5 10 3 10-7" fill="none" stroke="#333" strokeWidth="2.200" />
                    <path d="M7 5l4-4 3 5z" fill="#333" />
                  </S>
                </HoverMark>
              )}
            </MenuRow>
          )
        )}
      </Menu>

      <Tip>
        Inserts a base feature operation in the timeline. Any
        <br />
        operations performed while in the base feature are not
        <br />
        recorded in the timeline.
        <TipGap />
        Click Finish Base Feature to return to the Model workspace.
      </Tip>

      <NavBar>
        <NavGroup>
          <NavIcon>
            <S w={20} h={24} vb="0 0 22 24">
              <path d="M11 1l3 5h-2v18h-2V6H8z" fill="#eee" stroke="#444" strokeWidth=".7" />
              <path d="M4 13C0 17 6 20 12 19c6-1 9-4 7-7" fill="none" stroke="#333" strokeWidth="1.300" />
              <path d="M7 17l-5-1 2 5z" fill="#222" />
            </S>
          </NavIcon>
          <NavIcon $ml={5}><Caret $s={3.500} $c="#333" /></NavIcon>
          <NavIcon $ml={8}>
            <S w={20} h={20} vb="0 0 22 22">
              <rect x="1" y="7" width="20" height="14" fill="#f0f0f0" stroke="#555" />
              <rect x="5" y="11" width="12" height="6" fill="#c2c2c2" stroke="#555" />
              <path d="M3 7l3-5 4 3 7-3 1 5" fill="none" stroke="#555" />
            </S>
          </NavIcon>
          <NavIcon $ml={12}><Hand size={20} color="#444" fill="#f3f3f3" strokeWidth={1.500} /></NavIcon>
          <NavIcon $ml={13}>
            <S w={20} h={20} vb="0 0 22 22">
              <circle cx="8" cy="12" r="6.500" fill="#dbe8ea" stroke="#555" strokeWidth="1.500" />
              <path d="M13 17l4 4" stroke="#333" strokeWidth="2.500" />
              <path d="M15 3h6M18 0v6M15 8h6" stroke="#444" />
            </S>
          </NavIcon>
          <NavIcon $ml={12}>
            <S w={20} h={20} vb="0 0 22 22">
              <rect x=".5" y=".5" width="20" height="20" fill="none" stroke="#666" strokeDasharray="2 2" />
              <circle cx="10" cy="9" r="7.500" fill="#dbe8ea" stroke="#555" strokeWidth="1.500" />
              <path d="M16 15l5 5" stroke="#333" strokeWidth="2.500" />
            </S>
          </NavIcon>
          <NavIcon $ml={6}><Caret $s={3.500} $c="#333" /></NavIcon>
        </NavGroup>
        <NavGroup>
          <NavIcon>
            <S w={20} h={20} vb="0 0 22 22">
              <rect x="1" y="1" width="20" height="15" fill="#88abdb" stroke="#444" strokeWidth="1.500" />
              <path d="M7 17h8v3H7z" fill="#ddd" stroke="#555" />
            </S>
          </NavIcon>
          <NavIcon $ml={6}><Caret $s={3.500} $c="#333" /></NavIcon>
          <NavIcon $ml={8}>
            <S w={20} h={20} vb="0 0 21 21">
              <rect x=".5" y=".5" width="20" height="20" fill="#c8c8c8" stroke="#555" />
              <path d="M4 0v21M8 0v21M12 0v21M16 0v21M0 4h21M0 8h21M0 12h21M0 16h21" stroke="#6b6b6b" />
            </S>
          </NavIcon>
          <NavIcon $ml={6}><Caret $s={3.500} $c="#333" /></NavIcon>
          <NavIcon $ml={9}>
            <S w={19} h={17} vb="0 0 20 18">
              <rect x=".5" y=".5" width="19" height="17" fill="#2f507f" rx="1" />
              <path d="M2 2h7v6H2zM11 2h7v6h-7zM2 10h7v6H2zM11 10h7v6h-7z" fill="#86a9d8" />
            </S>
          </NavIcon>
          <NavIcon $ml={7}><Caret $s={3.500} $c="#333" /></NavIcon>
        </NavGroup>
      </NavBar>
    </Workspace>

    <Timeline>
      <FloatIcon $x={14} $y={22}><S w={3} h={16}><rect width="3" height="16" fill="#555" /></S></FloatIcon>
      <FloatIcon $x={393} $y={21}>
        <S w={20} h={21}>
          <path d="M1 8l7-7h5c4 1 6 4 6 8v6l-5 5H1z" fill="#dfe3ea" stroke="#666" />
          <path d="M8 1c5 0 9 3 10 9l-4 6c0-5-3-9-6-9z" fill="#6f9bd0" stroke="#446" strokeWidth=".7" />
        </S>
      </FloatIcon>
      <FloatIcon $x={409} $y={13}>
        <S w={16} h={41}>
          <path d="M1 1h14v5l-5 5h-4L1 6z" fill="#5a5a5a" />
          <rect x="7" y="10" width="2.500" height="30" fill="#5a5a5a" />
        </S>
      </FloatIcon>
      <FloatIcon $x={192} $y={46}>
        <S w={212} h={8}>
          <path d="M1 1v6M31 1v6M61 1v6M91 1v6M121 1v6M151 1v6M181 1v6M211 1v6" stroke="#5a5a5a" strokeWidth="2" />
          <path d="M0 6.500h212" stroke="#5a5a5a" strokeWidth="2" />
        </S>
      </FloatIcon>
      <FloatIcon $x={1889} $y={19}><FaCog size={19} color="#5b5b5b" /></FloatIcon>
    </Timeline>
  </Page>
)

export default App
